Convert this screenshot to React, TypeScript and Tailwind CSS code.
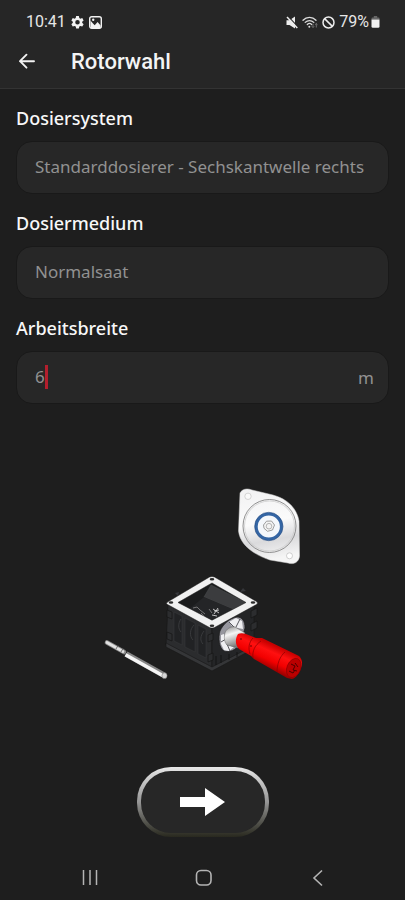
import { useState } from "react";

function StatusBar() {
    return (
        <div className="flex items-center justify-between pl-[26px] pr-[25px] font-['Roboto',sans-serif] text-base leading-5 text-[#e6e6e6]">
            <div className="flex items-center gap-[5px]">
                <span>10:41</span>
                <svg width="13" height="14" viewBox="0 0 24 24" aria-hidden="true">
                    <path
                        fill="#f2f2f2"
                        fillRule="evenodd"
                        d="M9.500 1h5l.8 3.600 2 1.200 3.500-1.100 2.500 4.300-2.700 2.500v2l2.700 2.500-2.500 4.300-3.500-1.100-2 1.200-.8 3.600h-5l-.8-3.600-2-1.200-3.500 1.100L.7 16l2.700-2.500v-2L.7 9l2.500-4.300 3.500 1.100 2-1.200zM12 8.300a4.200 4.200 0 1 0 0 8.400 4.200 4.200 0 0 0 0-8.400z"
                    />
                </svg>
                <svg width="13" height="13" viewBox="0 0 13 13" aria-hidden="true">
                    <rect x="0.700" y="0.700" width="11.600" height="11.600" rx="2" fill="none" stroke="#f2f2f2" strokeWidth="1.400" />
                    <path d="M1.500 11V4.500L4 7.500l1.700 1.800L8.600 6l3 3.500V12h-10z" fill="#f2f2f2" />
                    <circle cx="4.200" cy="3.800" r="1.200" fill="#f2f2f2" />
                </svg>
            </div>
            <div className="flex items-center gap-1">
                <svg width="12" height="13" viewBox="0 0 12 13" aria-hidden="true">
                    <path d="M0.500 4.200h3L9 0.500v12L3.500 9h-3z" fill="#ededed" />
                    <path d="M2 0.300 11.500 10.300" stroke="#262626" strokeWidth="1.200" />
                    <path d="M1 1 11.300 11.900" stroke="#ededed" strokeWidth="1.500" />
                </svg>
                <svg width="16" height="12" viewBox="0 0 16 12" fill="none" aria-hidden="true">
                    <g stroke="#dcdcdc" strokeWidth="1.300" strokeLinecap="round">
                        <path d="M1 4.200C4.600 0.300 10.400 0.300 14 4.200" />
                        <path d="M3.200 6.400c2.500-2.500 6.100-2.500 8.600 0" />
                        <path d="M5.300 8.500c1.200-1.200 3.200-1.200 4.400 0" />
                    </g>
                    <circle cx="7.300" cy="10.700" r="1" fill="#dcdcdc" />
                    <path d="M11 7.500v4M9.800 10.300l1.200 1.200 1.200-1.200M14.300 11.500v-4M13.100 8.700l1.200-1.200 1.200 1.200" stroke="#777" strokeWidth="0.900" />
                </svg>
                <svg width="13" height="13" viewBox="0 0 13 13" fill="none" stroke="#ededed" strokeWidth="1.500" aria-hidden="true">
                    <circle cx="6.500" cy="6.500" r="5.500" />
                    <path d="m2.600 2.600 7.800 7.800" />
                </svg>
                <span className="-mr-0.5">79%</span>
                <svg width="9" height="12" viewBox="0 0 9 12" aria-hidden="true">
                    <path d="M0.500 3.500V2.500a1 1 0 0 1 1-1h1.300V0h3.400v1.500h1.300a1 1 0 0 1 1 1v1z" fill="#666" />
                    <path d="M0.500 3.500h8v7a1.300 1.300 0 0 1-1.300 1.300H1.800A1.300 1.300 0 0 1 .5 10.500z" fill="#f2f2f2" />
                </svg>
            </div>
        </div>
    );
}

interface FieldProps {
    id: string;
    label: string;
    value: string;
    onChange: (value: string) => void;
    unit?: string;
}

function Field({ id, label, value, onChange, unit }: FieldProps) {
    return (
        <div>
            <label htmlFor={id} className="block text-lg leading-6 font-medium text-[#f8f8f8]">
                {label}
            </label>
            <div className="mt-[11px] flex h-[53px] items-center rounded-2xl border border-[#191919] bg-[#272727] pr-[14px] pl-[18px] text-[17px] text-[#919191]">
                <input
                    id={id}
                    value={value}
                    onChange={e => onChange(e.target.value)}
                    className={`mb-0.5 h-6 min-w-0 bg-transparent leading-6 outline-none ${unit ? "field-sizing-content caret-transparent" : "mr-[3px] w-full"}`}
                />
                {unit && (
                    <>
                        <span className="mb-0.5 h-6 w-[3px] shrink-0 bg-[#b31f2d]" />
                        <span className="ml-auto">{unit}</span>
                    </>
                )}
            </div>
        </div>
    );
}

function Illustration() {
    return (
        <svg width="206" height="200" viewBox="100 486 206 200" role="img" aria-label="Dosierer">
            <defs>
                <linearGradient id="plate" x1="0" y1="0" x2="0.150" y2="1">
                    <stop offset="0" stopColor="#f1f1f2" />
                    <stop offset="0.500" stopColor="#fbfbfb" />
                    <stop offset="0.750" stopColor="#dadadc" />
                    <stop offset="1" stopColor="#f5f5f5" />
                </linearGradient>
                <linearGradient id="motor" x1="274" y1="645" x2="264" y2="667" gradientUnits="userSpaceOnUse">
                    <stop offset="0" stopColor="#c80000" />
                    <stop offset="0.300" stopColor="#ff1010" />
                    <stop offset="0.650" stopColor="#f20000" />
                    <stop offset="1" stopColor="#950000" />
                </linearGradient>
                <linearGradient id="collar" x1="0" y1="0" x2="0.300" y2="1">
                    <stop offset="0" stopColor="#8a8a8a" />
                    <stop offset="0.400" stopColor="#f5f5f5" />
                    <stop offset="1" stopColor="#777" />
                </linearGradient>
            </defs>

            {/* Cover plate */}
            <path
                d="M240 493C242 489 247 488 252 490L273 495C288 499 297 509 299 521L299.500 556C299 562 294 565 288 563L270 560C252 554 240 544 238.500 531Z"
                fill="url(#plate)"
                stroke="#d5d5d5"
                strokeWidth="0.500"
            />
            <circle cx="248" cy="496.300" r="3.200" fill="#fafafa" stroke="#c4c4c4" strokeWidth="0.700" />
            <circle cx="289.500" cy="555.800" r="3" fill="#fff" stroke="#bbb" strokeWidth="0.700" />
            <circle cx="269.500" cy="526" r="26.500" fill="none" stroke="#858585" strokeWidth="0.900" />
            <circle cx="269.500" cy="526" r="25" fill="none" stroke="#c8c8c8" strokeWidth="0.700" />
            <circle cx="268.800" cy="526.500" r="12.600" fill="#f4f7fb" stroke="#3465a4" strokeWidth="3" />
            <circle cx="268.800" cy="526.500" r="14.200" fill="none" stroke="#1d457c" strokeWidth="0.600" />
            <path d="m263.500 525 3-3.800 5-.2 3 4-2 5-5 1.300-3.500-3z" fill="#f3f3f3" stroke="#888" strokeWidth="0.800" />
            <circle cx="269" cy="526.200" r="2.800" fill="none" stroke="#999" strokeWidth="0.700" />

            {/* Shaft */}
            <path d="M107 642.500 124 652" stroke="#888" strokeWidth="4.600" strokeLinecap="round" />
            <path d="M107 642.500 123 651.500" stroke="#e2e2e2" strokeWidth="2.800" strokeLinecap="round" />
            <path d="m126 654 38.500 21.500" stroke="#858585" strokeWidth="5.800" />
            <path d="m125.500 654.800 38 21.200" stroke="#f5f5f5" strokeWidth="3.600" />
            <path d="m116 649 2-3.500M121 652l2-3.500" stroke="#555" strokeWidth="0.800" />
            <ellipse cx="164.500" cy="675.700" rx="2.600" ry="2.900" fill="#d7d7d7" stroke="#666" strokeWidth="0.500" />

            {/* Housing */}
            <path d="m168 604 44 24v42L166 645z" fill="#2b2c2e" stroke="#171717" strokeWidth="0.700" />
            <path d="m212 628 42-24v43l-42 23z" fill="#242527" stroke="#171717" strokeWidth="0.700" />
            <path d="m166 643 46 24 43-22v3l-43 23-46-24z" fill="#353638" stroke="#171717" strokeWidth="0.600" />
            <g fill="#212224" stroke="#3a3b3d" strokeWidth="0.500">
                <path d="M174 612v29l8 4v-29z" />
                <path d="M185 618v29l10 5v-29z" />
                <path d="M198 625v29l8 4v-29z" />
            </g>
            <path d="M181 619c-3 4-3 10 0 13M194 625c-4 4-5 11-1 15M204 631c-4 5-4 10-1 13" fill="none" stroke="#3f4043" strokeWidth="0.800" />
            <g fill="#2c2d2f" stroke="#151515" strokeWidth="0.700">
                <path d="m167 610 5 2v7l-5-2zM167 632l5 2v7l-5-2zM208 635l5-2v7l-5 2zM208 655l5-2v7l-5 2z" />
                <path d="m251 611 6-3v7l-6 3zM251 624l6-3v7l-6 3z" />
            </g>
            <path d="M175 593l4-1-1 4zM240 592l3-4 3 3z" fill="#35363a" />
            <path d="M216 656v9M221 655v8M229 654v6M237 652v5" stroke="#121212" strokeWidth="0.900" />

            {/* Funnel opening */}
            <path d="m174 603 38-20 38 20-38 21z" fill="#1b1c1d" />
            <path d="m211 585 36 18-10 8-33-14z" fill="#3b3c3e" stroke="#4b4c4e" strokeWidth="0.500" />
            <path d="m204 597 33 14-25 13-24-14z" fill="#242527" />
            <path d="m193 608 4-1 3 3 5 4M201 613l4 4M209 609l3 4" fill="none" stroke="#8a8a8a" strokeWidth="0.800" />
            <path d="m213 609 6 4M218 608l-4 6M214 611l5-1M212 615l5 1" stroke="#d5d5d5" strokeWidth="0.900" />
            <path
                d="m167.500 602 42-25q2.500-1 5 0l42 24.500q2 1.500 0 3l-42 23q-2.500 1.200-5 0l-42-23q-2-1-0-2.500zM178 602.500l34 17.700 34-17.700-34-19.500z"
                fill="#f1f1f1"
                fillRule="evenodd"
                stroke="#161616"
                strokeWidth="0.500"
            />
            <g fill="#2b2b2b">
                <ellipse cx="171" cy="602.500" rx="2.300" ry="1.300" />
                <ellipse cx="212" cy="579.200" rx="2.300" ry="1.300" />
                <ellipse cx="253" cy="602.500" rx="2.300" ry="1.300" />
                <ellipse cx="212" cy="625.700" rx="2.300" ry="1.300" />
            </g>

            {/* Bearing and motor */}
            <path d="M220 631c3-7 10-13 17-14 5 0 8 4 8 11l-5 16c-4 6-11 9-16 7-5-3-6-13-4-20z" fill="#96969e" stroke="#1a1a1a" strokeWidth="0.700" />
            <path d="m229 622 7-4 6 3 1 8-5-1-6-2zM221 635l3-1 3 11 7 2-5 4-5-1-3-6z" fill="#efeff2" />
            <path d="m229 622 5 5M240 619l-4 8M221 642l5-3M230 651l-3-7" stroke="#45454c" strokeWidth="0.900" />
            <path d="M225 633c1-4 6-7 10-6l10 6-7 15-11-3c-3-3-3-8-2-12z" fill="url(#collar)" stroke="#555" strokeWidth="0.400" />
            <path
                d="M238 634c2-1 5-1 8 0l10 4 6 0 37 18c3 3 4 7 2 12s-5 10-9 11l-5-1-33-19-3-3-12-7c-4-4-4-10-1-15z"
                fill="url(#motor)"
            />
            <path d="M253 638c-4 4-5 10-3 16M261 641c-6 4-9 10-8 17M285 652c-5 4-8 12-8 20" fill="none" stroke="#8a0000" strokeWidth="0.700" />
            <ellipse cx="293.800" cy="668" rx="6.800" ry="10" fill="#bb0000" stroke="#850000" strokeWidth="0.600" transform="rotate(23 293.800 668)" />
            <path d="m291 664 4 2-2 4 4 1M289 671l4 2 2-3M295 663l3 4" fill="none" stroke="#4a0000" strokeWidth="1" />
            <circle cx="241" cy="639" r="0.800" fill="#500" />
            <circle cx="251" cy="646" r="0.800" fill="#500" />
        </svg>
    );
}

export default function App() {
    const [system, setSystem] = useState("Standarddosierer - Sechskantwelle rechts");
    const [medium, setMedium] = useState("Normalsaat");
    const [width, setWidth] = useState("6");

    return (
        <div className="flex min-h-screen flex-col bg-[#1e1e1e] font-['Noto_Sans',sans-serif]">
            <header className="border-b border-[#333] bg-[#262626] pt-3 pb-3">
                <StatusBar />
                <div className="mt-4 flex h-7 items-center gap-[35px] pl-[18px]">
                    <button aria-label="Zurück">
                        <svg width="18" height="18" viewBox="0 0 18 18" fill="none" stroke="#f2f2f2" strokeWidth="1.900" strokeLinecap="round" strokeLinejoin="round">
                            <path d="M16 8.200H2M8.500 1.700 2 8.200l6.500 6.500" />
                        </svg>
                    </button>
                    <h1 className="font-['Roboto',sans-serif] text-[22px] leading-7 font-medium text-[#f4f4f4]">Rotorwahl</h1>
                </div>
            </header>

            <main className="flex flex-1 flex-col">
                <div className="flex flex-col gap-[17px] px-4 pt-[17px]">
                    <Field id="system" label="Dosiersystem" value={system} onChange={setSystem} />
                    <Field id="medium" label="Dosiermedium" value={medium} onChange={setMedium} />
                    <Field id="width" label="Arbeitsbreite" value={width} onChange={setWidth} unit="m" />
                </div>

                <div className="flex flex-1 items-center justify-center">
                    <Illustration />
                </div>

                <button
                    aria-label="Weiter"
                    className="mx-auto h-[70px] w-[132px] rounded-[34px] bg-linear-to-b from-[#e8e8e8] via-[#969696] to-[#29291f] p-1"
                >
                    <span className="flex h-full items-center justify-center rounded-[30px] bg-[#272727]">
                        <svg width="46" height="28" viewBox="0 0 46 28" aria-hidden="true">
                            <path d="M0 9h25V0l20 14-20 14v-9H0z" fill="#fff" />
                        </svg>
                    </span>
                </button>
            </main>

            <nav className="mt-7 flex h-[35px] items-start justify-between pr-[78px] pl-[81px]">
                <button aria-label="Letzte Apps" className="py-1">
                    <svg width="18" height="18" viewBox="0 0 18 18" stroke="#b4b4b4" strokeWidth="1.500">
                        <path d="M2.500 1v15M9 1v15M15.500 1v15" />
                    </svg>
                </button>
                <button aria-label="Startbildschirm" className="py-1">
                    <svg width="18" height="18" viewBox="0 0 18 18" fill="none" stroke="#b4b4b4" strokeWidth="1.600">
                        <rect x="1.500" y="1.500" width="14.500" height="14.500" rx="4.500" />
                    </svg>
                </button>
                <button aria-label="Zurück" className="py-1">
                    <svg width="18" height="18" viewBox="0 0 18 18" fill="none" stroke="#b4b4b4" strokeWidth="1.600">
                        <path d="M13 1.500 5 9l8 7.500" />
                    </svg>
                </button>
            </nav>
        </div>
    );
}
